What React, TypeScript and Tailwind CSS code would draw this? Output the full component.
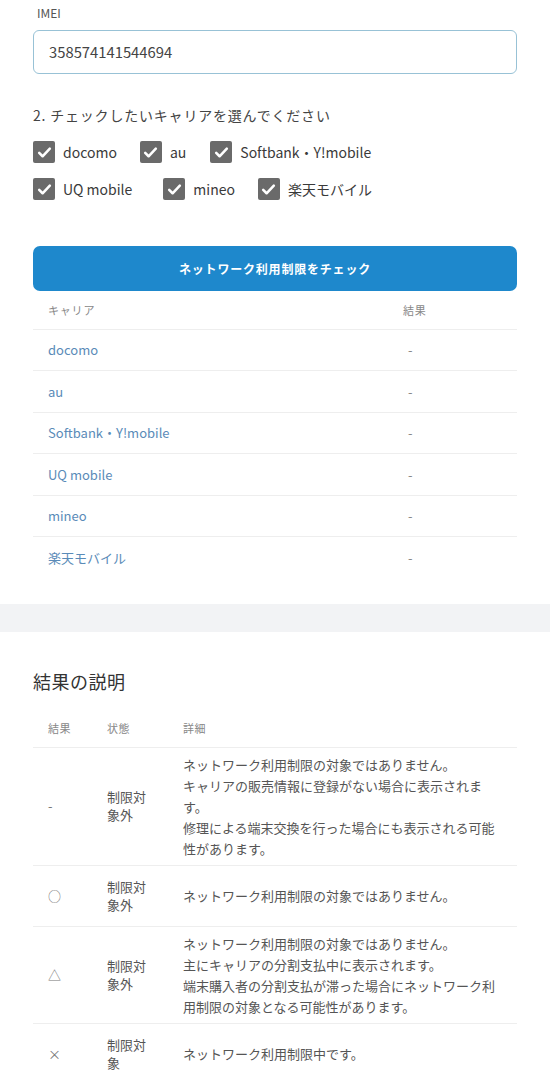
import { Fragment } from "react";

const carriers = ["docomo", "au", "Softbank・Y!mobile", "UQ mobile", "mineo", "楽天モバイル"];

const legend = [
  {
    mark: "-",
    state: "制限対象外",
    lines: [
      "ネットワーク利用制限の対象ではありません。",
      "キャリアの販売情報に登録がない場合に表示されます。",
      "修理による端末交換を行った場合にも表示される可能性があります。",
    ],
  },
  { mark: "○", state: "制限対象外", lines: ["ネットワーク利用制限の対象ではありません。"] },
  {
    mark: "△",
    state: "制限対象外",
    lines: [
      "ネットワーク利用制限の対象ではありません。",
      "主にキャリアの分割支払中に表示されます。",
      "端末購入者の分割支払が滞った場合にネットワーク利用制限の対象となる可能性があります。",
    ],
  },
  { mark: "×", state: "制限対象", lines: ["ネットワーク利用制限中です。"] },
];

function CheckItem({ label, className = "" }: { label: string; className?: string }) {
  return (
    <label className={`flex items-center gap-[8px] ${className}`}>
      <span className="flex h-[22px] w-[22px] items-center justify-center rounded-[2px] bg-[#6a6a6a]">
        <svg viewBox="0 0 24 24" className="h-[17px] w-[17px]" fill="none">
          <path d="M4.5 12.5l4.8 4.8L19.5 6.5" stroke="white" strokeWidth="3.6" strokeLinecap="round" strokeLinejoin="round" />
        </svg>
      </span>
      <span className="text-[14px] text-[#3a3a3a]">{label}</span>
    </label>
  );
}

export default function App() {
  return (
    <div className="w-[550px] bg-white text-[#444] [font-family:'Noto_Sans_CJK_JP','Noto_Sans',sans-serif]">
      <section className="px-[33px] pt-[4px] pb-[26px]">
        <p className="pl-[4px] text-[12px] leading-[18px] text-[#555]">IMEI</p>
        <div className="mt-[8px] flex h-[44px] items-center rounded-[6px] border border-[#98c2d6] px-[15px] text-[14.8px] text-[#444]">
          358574141544694
        </div>

        <p className="mt-[31px] text-[14px] leading-[20px] tracking-[0.8px] text-[#444]">2. チェックしたいキャリアを選んでください</p>

        <div className="mt-[16px] flex flex-col gap-[15px]">
          <div className="flex items-center">
            <CheckItem label="docomo" className="mr-[23px]" />
            <CheckItem label="au" className="mr-[24px]" />
            <CheckItem label="Softbank・Y!mobile" />
          </div>
          <div className="flex items-center">
            <CheckItem label="UQ mobile" className="mr-[31px]" />
            <CheckItem label="mineo" className="mr-[23px]" />
            <CheckItem label="楽天モバイル" />
          </div>
        </div>

        <button className="mt-[46px] flex h-[45px] w-full items-center justify-center rounded-[7px] bg-[#1e88cc] text-[12px] font-bold tracking-[0.8px] text-white">
          ネットワーク利用制限をチェック
        </button>

        <table className="w-full table-fixed border-collapse">
          <thead>
            <tr className="h-[38px] text-left text-[11px] tracking-[0.8px] text-[#888]">
              <th className="w-[355px] pl-[15px] font-normal">キャリア</th>
              <th className="pl-[15px] font-normal">結果</th>
            </tr>
          </thead>
          <tbody>
            {carriers.map((c) => (
              <tr key={c} className="h-[41.5px] border-t border-[#eeeeee] text-[13px]">
                <td className="pl-[15px] text-[#5a8bb8]">{c}</td>
                <td className="pl-[20px] text-[#888]">-</td>
              </tr>
            ))}
          </tbody>
        </table>
      </section>

      <div className="h-[28px] bg-[#f2f3f5]" />

      <section className="px-[33px] pt-[36px]">
        <h2 className="text-[18px] leading-[26px] tracking-[0.5px] text-[#333]">結果の説明</h2>
        <table className="mt-[15px] w-full table-fixed border-collapse">
          <thead>
            <tr className="h-[38px] text-left text-[11px] tracking-[0.5px] text-[#888]">
              <th className="w-[59px] pl-[15px] font-normal">結果</th>
              <th className="w-[76px] pl-[15px] font-normal">状態</th>
              <th className="pl-[15px] font-normal">詳細</th>
            </tr>
          </thead>
          <tbody>
            {legend.map((r) => (
              <tr key={r.mark} className="border-t border-[#eeeeee] text-[13px] text-[#555]">
                <td className="pl-[15px] align-middle text-[#777]">{r.mark}</td>
                <td className="px-[15px] py-[12px] align-middle leading-[18px]">{r.state}</td>
                <td className="px-[15px] py-[6px] align-middle leading-[21px]">
                  {r.lines.map((l, i) => (
                    <Fragment key={i}>
                      {i > 0 && <br />}
                      {l}
                    </Fragment>
                  ))}
                </td>
              </tr>
            ))}
          </tbody>
        </table>
      </section>
    </div>
  );
}
